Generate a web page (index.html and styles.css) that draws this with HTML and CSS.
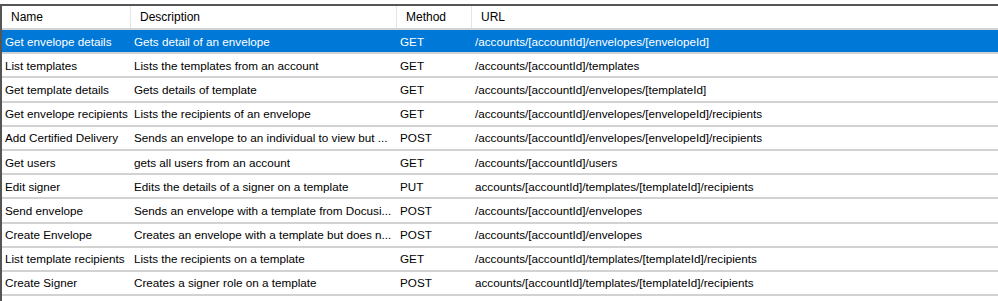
FILE: index.html
```html
<!DOCTYPE html>
<html lang="en">
<head>
    <meta charset="UTF-8">
    <title>API calls</title>
    <link rel="stylesheet" href="styles.css">
</head>
<body>
    <div class="list">
        <!-- Column headers -->
        <div class="head">
            <span>Name</span>
            <span>Description</span>
            <span>Method</span>
            <span>URL</span>
        </div>

        <div class="row selected">
            <span>Get envelope details</span>
            <span>Gets detail of an envelope</span>
            <span>GET</span>
            <span>/accounts/[accountId]/envelopes/[envelopeId]</span>
        </div>
        <div class="row">
            <span>List templates</span>
            <span>Lists the templates from an account</span>
            <span>GET</span>
            <span>/accounts/[accountId]/templates</span>
        </div>
        <div class="row">
            <span>Get template details</span>
            <span>Gets details of template</span>
            <span>GET</span>
            <span>/accounts/[accountId]/envelopes/[templateId]</span>
        </div>
        <div class="row">
            <span>Get envelope recipients</span>
            <span>Lists the recipients of an envelope</span>
            <span>GET</span>
            <span>/accounts/[accountId]/envelopes/[envelopeId]/recipients</span>
        </div>
        <div class="row">
            <span>Add Certified Delivery</span>
            <span>Sends an envelope to an individual to view but ...</span>
            <span>POST</span>
            <span>/accounts/[accountId]/envelopes/[envelopeId]/recipients</span>
        </div>
        <div class="row">
            <span>Get users</span>
            <span>gets all users from an account</span>
            <span>GET</span>
            <span>/accounts/[accountId]/users</span>
        </div>
        <div class="row">
            <span>Edit signer</span>
            <span>Edits the details of a signer on a template</span>
            <span>PUT</span>
            <span>accounts/[accountId]/templates/[templateId]/recipients</span>
        </div>
        <div class="row">
            <span>Send envelope</span>
            <span>Sends an envelope with a template from Docusi...</span>
            <span>POST</span>
            <span>/accounts/[accountId]/envelopes</span>
        </div>
        <div class="row">
            <span>Create Envelope</span>
            <span>Creates an envelope with a template but does n...</span>
            <span>POST</span>
            <span>/accounts/[accountId]/envelopes</span>
        </div>
        <div class="row">
            <span>List template recipients</span>
            <span>Lists the recipients on a template</span>
            <span>GET</span>
            <span>/accounts/[accountId]/templates/[templateId]/recipients</span>
        </div>
        <div class="row">
            <span>Create Signer</span>
            <span>Creates a signer role on a template</span>
            <span>POST</span>
            <span>accounts/[accountId]/templates/[templateId]/recipients</span>
        </div>
    </div>
</body>
</html>
```

FILE: styles.css
```css
body {
    margin: 0;
    background-color: #fff;
    font-family: "Liberation Sans", Arial, sans-serif;
    font-size: 11.7px;
    color: #000;
}
.list {
    margin-top: 4px;
    border-top: 2px solid #555;
    border-left: 2px solid #555;
    height: 295px;
}
.head, .row {
    display: grid;
    grid-template-columns: 129px 266px 75px 1fr;
}
.head {
    height: 22px;
    font-size: 12px;
}
.head span {
    display: flex;
    align-items: center;
    padding-left: 9px;
    border-right: 1px solid #e5e5e5;
}
.head span:last-child {
    border-right: none;
}
.row {
    height: 22.2px;
    border-top: 2px solid #d2d2d2;
}
.row span {
    display: flex;
    align-items: center;
    padding-left: 3px;
    white-space: nowrap;
    overflow: hidden;
}
.row:last-child {
    border-bottom: 2px solid #d2d2d2;
}
.row.selected {
    background-color: #0078d7; /* windows highlight */
    color: #fff;
}
```
